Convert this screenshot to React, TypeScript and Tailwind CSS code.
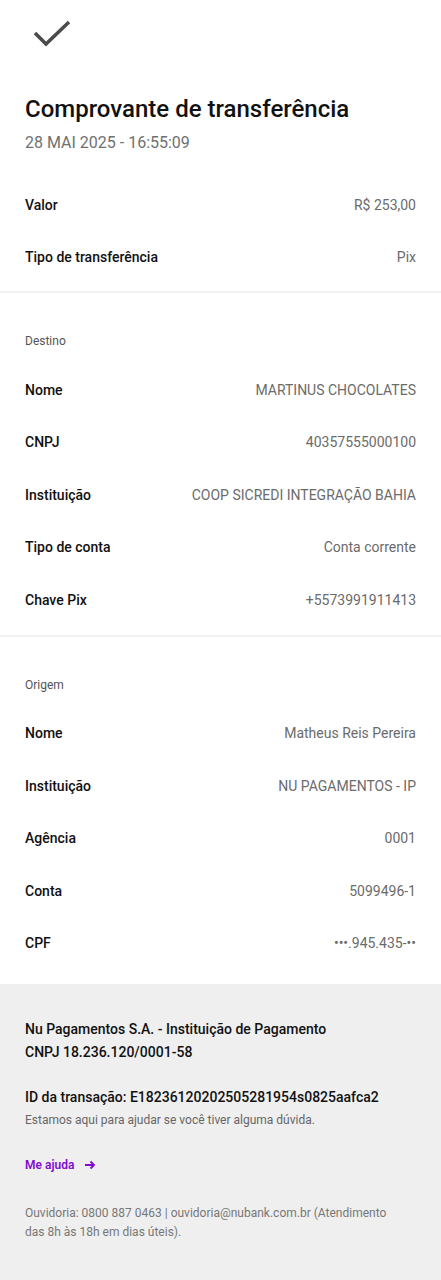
import React from "react";

type Row = { label: string; value: string };

const DetailRow = ({ label, value }: Row) => (
  <div className="flex h-[52.5px] items-center justify-between">
    <span className="text-[14px] font-medium text-[#111111]">{label}</span>
    <span className="text-[14px] text-[#6b6b6b]">{value}</span>
  </div>
);

const App = () => {
  const resumo: Row[] = [
    { label: "Valor", value: "R$ 253,00" },
    { label: "Tipo de transferência", value: "Pix" },
  ];
  const destino: Row[] = [
    { label: "Nome", value: "MARTINUS CHOCOLATES" },
    { label: "CNPJ", value: "40357555000100" },
    { label: "Instituição", value: "COOP SICREDI INTEGRAÇÃO BAHIA" },
    { label: "Tipo de conta", value: "Conta corrente" },
    { label: "Chave Pix", value: "+5573991911413" },
  ];
  const origem: Row[] = [
    { label: "Nome", value: "Matheus Reis Pereira" },
    { label: "Instituição", value: "NU PAGAMENTOS - IP" },
    { label: "Agência", value: "0001" },
    { label: "Conta", value: "5099496-1" },
    { label: "CPF", value: "•••.945.435-••" },
  ];

  return (
    <div className="min-h-[1280px] w-[441px] bg-white font-['Roboto',sans-serif] text-[#111111]">
      <div className="px-[25px] pt-[18px]">
        <svg width="40" height="32" viewBox="0 0 40 32" className="ml-[7px]">
          <polyline
            points="3,15 14,26 37,4"
            fill="none"
            stroke="#4a4a4a"
            strokeWidth="3.5"
          />
        </svg>
        <h1 className="mt-[43px] text-[24px] leading-8 font-medium">
          Comprovante de transferência
        </h1>
        <p className="mt-[6px] text-[16px] leading-6 text-[#707070]">28 MAI 2025 - 16:55:09</p>
        <div className="mt-[24px] pb-[7px]">
          {resumo.map((r) => (
            <DetailRow key={r.label} {...r} />
          ))}
        </div>
      </div>
      <div className="h-[2px] bg-[#f2f2f2]" />
      <div className="px-[25px] pt-[40px] pb-[8px]">
        <p className="text-[12px] leading-4 text-[#555555]">Destino</p>
        <div className="mt-[15px]">
          {destino.map((r) => (
            <DetailRow key={r.label} {...r} />
          ))}
        </div>
      </div>
      <div className="h-[2px] bg-[#f2f2f2]" />
      <div className="px-[25px] pt-[40px] pb-[14px]">
        <p className="text-[12px] leading-4 text-[#555555]">Origem</p>
        <div className="mt-[15px]">
          {origem.map((r) => (
            <DetailRow key={r.label + r.value} {...r} />
          ))}
        </div>
      </div>
      <div className="bg-[#efefef] px-[25px] pt-[34px] pb-[40px]">
        <p className="text-[14px] leading-[23px] font-medium">
          Nu Pagamentos S.A. - Instituição de Pagamento
          <br />
          CNPJ 18.236.120/0001-58
        </p>
        <p className="mt-[23px] text-[14px] leading-5 font-medium">
          ID da transação: E18236120202505281954s0825aafca2
        </p>
        <p className="mt-[4px] text-[12px] leading-[18px] text-[#666666]">
          Estamos aqui para ajudar se você tiver alguma dúvida.
        </p>
        <div className="mt-[27px] flex items-center gap-[10px] text-[12px] leading-[18px] font-semibold text-[#820ad1]">
          <span>Me ajuda</span>
          <svg width="12" height="12" viewBox="0 0 12 12" fill="none" stroke="#820ad1" strokeWidth="1.8">
            <path d="M1 6h9M6.5 2.5 10 6l-3.5 3.5" />
          </svg>
        </div>
        <p className="mt-[30px] max-w-[370px] text-[12px] leading-[19px] text-[#777777]">
          Ouvidoria: 0800 887 0463 | ouvidoria@nubank.com.br (Atendimento das 8h às 18h em dias úteis).
        </p>
      </div>
    </div>
  );
};

export default App;
